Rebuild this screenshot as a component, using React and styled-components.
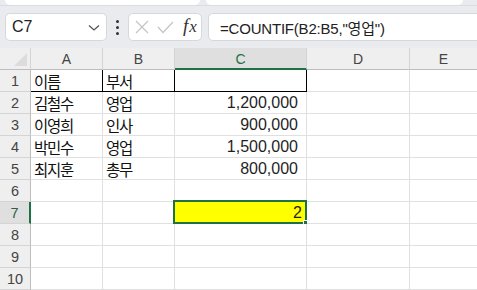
import styled, { createGlobalStyle } from 'styled-components'

const GlobalStyle = createGlobalStyle`
  html, body {
    margin: 0;
    padding: 0;
    background: #e9ebee;
    font-family: "Liberation Sans", Arial, sans-serif;
    overflow: hidden;
  }
`

const green = '#1e7145'

const columns = [
  { key: 'A', width: 72 },
  { key: 'B', width: 72 },
  { key: 'C', width: 132 },
  { key: 'D', width: 103 },
  { key: 'E', width: 68 },
]

const rows = [
  ['이름', '부서', ''],
  ['김철수', '영업', '1,200,000'],
  ['이영희', '인사', '900,000'],
  ['박민수', '영업', '1,500,000'],
  ['최지훈', '총무', '800,000'],
  ['', '', ''],
  ['', '', '2'],
  ['', '', ''],
  ['', '', ''],
  ['', '', ''],
]

export default function App() {
  return (
    <>
      <GlobalStyle />
      <Ribbon>
        <RibbonPanel $width={195} />
        <RibbonPanel $width={257} />
      </Ribbon>
      <FormulaBar>
        <NameBox>
          <span>C7</span>
          <svg width="12" height="8" viewBox="0 0 12 8">
            <path d="M1 1.5 L6 6 L11 1.5" fill="none" stroke="#555" strokeWidth="1.3" />
          </svg>
        </NameBox>
        <Dots>
          <i />
          <i />
          <i />
        </Dots>
        <FxBox>
          <svg width="14" height="14" viewBox="0 0 14 14">
            <path d="M1 1 L13 13 M13 1 L1 13" stroke="#c4c4c4" strokeWidth="1.2" />
          </svg>
          <svg width="17" height="13" viewBox="0 0 17 13">
            <path d="M1 6 L6 11.5 L16 1" fill="none" stroke="#c4c4c4" strokeWidth="1.2" />
          </svg>
          <Fx>
            f<span>x</span>
          </Fx>
        </FxBox>
        <FormulaInput>=COUNTIF(B2:B5,"영업")</FormulaInput>
      </FormulaBar>
      <Sheet>
        <Corner>
          <Triangle />
        </Corner>
        {columns.map((c) => (
          <ColHead key={c.key} $width={c.width} $active={c.key === 'C'}>
            {c.key}
          </ColHead>
        ))}
        {rows.map((r, i) => {
          const n = i + 1
          return [
            <RowHead key={`h${n}`} $active={n === 7}>
              {n}
            </RowHead>,
            <Cell key={`a${n}`} $boxed={n === 1}>
              <Kr>{r[0]}</Kr>
            </Cell>,
            <Cell key={`b${n}`} $boxed={n === 1}>
              <Kr>{r[1]}</Kr>
            </Cell>,
            <Cell
              key={`c${n}`}
              $boxed={n === 1}
              $num
              $fill={n === 7 ? '#ffff00' : undefined}
              $pad={n === 7 ? 4 : 8}
            >
              {r[2]}
              {n === 7 && (
                <>
                  <Selection />
                  <Handle />
                </>
              )}
            </Cell>,
            <Cell key={`d${n}`} />,
            <Cell key={`e${n}`} />,
          ]
        })}
      </Sheet>
    </>
  )
}

const Ribbon = styled.div`
  display: flex;
  gap: 6px;
  padding-left: 5px;
  height: 5px;
  box-shadow: 0 1px 0 #dadde1;
`

const RibbonPanel = styled.div`
  width: ${(p) => p.$width}px;
  background: #fff;
  border-radius: 0 0 6px 6px;
`

const FormulaBar = styled.div`
  display: flex;
  align-items: center;
  height: 28px;
  margin-top: 8px;
  padding-left: 5px;
`

const Box = styled.div`
  box-sizing: border-box;
  height: 28px;
  background: #fff;
  border: 1px solid #d5d8dc;
  border-radius: 5px;
  display: flex;
  align-items: center;
`

const NameBox = styled(Box)`
  width: 102px;
  padding: 0 6px 0 6px;
  justify-content: space-between;
  font-size: 16px;
  color: #222;
  svg {
    margin-top: 2px;
  }
`

const Dots = styled.div`
  width: 21px;
  display: flex;
  flex-direction: column;
  align-items: center;
  gap: 3px;
  i {
    width: 3px;
    height: 3px;
    border-radius: 50%;
    background: #333;
  }
`

const FxBox = styled(Box)`
  width: 74px;
  padding-left: 6px;
  gap: 8px;
`

const Fx = styled.span`
  font-family: "Liberation Serif", "DejaVu Serif", serif;
  font-style: italic;
  font-size: 19px;
  color: #333;
  margin-left: 1px;
  margin-top: -2px;
  span {
    font-size: 17px;
    margin-left: 1px;
  }
`

const FormulaInput = styled(Box)`
  flex: 1;
  margin-left: 6px;
  margin-right: -10px;
  padding-left: 11px;
  font-size: 15px;
  letter-spacing: -0.2px;
  color: #222;
  white-space: nowrap;
  font-family: "Liberation Sans", "Noto Sans CJK KR", sans-serif;
`

const Sheet = styled.div`
  margin-top: 7px;
  display: grid;
  grid-template-columns: 31px 72px 72px 132px 103px 68px;
  grid-auto-rows: 22px;
  background: #fff;
`

const HeadBase = styled.div`
  box-sizing: border-box;
  background: #efefef;
  display: flex;
  align-items: center;
  justify-content: center;
  font-size: 14px;
  color: #444;
  font-family: "Liberation Sans", sans-serif;
`

const Corner = styled(HeadBase)`
  position: relative;
  border-right: 1px solid #d4d4d4;
  border-bottom: 1px solid #bdbdbd;
`

const Triangle = styled.div`
  position: absolute;
  right: 3px;
  bottom: 3px;
  width: 0;
  height: 0;
  border-left: 13px solid transparent;
  border-bottom: 13px solid #dcdcdc;
`

const ColHead = styled(HeadBase)`
  background: ${(p) => (p.$active ? '#dfdfdf' : '#efefef')};
  color: ${(p) => (p.$active ? green : '#444')};
  border-right: 1px solid #d4d4d4;
  border-bottom: ${(p) => (p.$active ? `2px solid ${green}` : '1px solid #bdbdbd')};
  padding-top: ${(p) => (p.$active ? '1px' : '0')};
`

const RowHead = styled(HeadBase)`
  background: ${(p) => (p.$active ? '#dfdfdf' : '#efefef')};
  color: ${(p) => (p.$active ? '#2f5f44' : '#444')};
  border-right: ${(p) => (p.$active ? `2px solid ${green}` : '1px solid #bdbdbd')};
  border-bottom: 1px solid #d4d4d4;
  font-size: 14.5px;
`

const Cell = styled.div`
  position: relative;
  box-sizing: border-box;
  display: flex;
  align-items: center;
  justify-content: ${(p) => (p.$num ? 'flex-end' : 'flex-start')};
  padding: 0 ${(p) => (p.$num ? p.$pad : 0)}px 0 3px;
  background: ${(p) => p.$fill || '#fff'};
  border-right: 1px solid ${(p) => (p.$boxed ? '#000' : '#e0e0e0')};
  border-bottom: 1px solid ${(p) => (p.$boxed ? '#000' : '#e0e0e0')};
  font-size: 16px;
  color: #1f1f1f;
  white-space: nowrap;
`

const Kr = styled.span`
  font-family: "Noto Sans CJK KR", sans-serif;
  font-size: 15.5px;
  letter-spacing: -1.2px;
  color: #111;
`

const Selection = styled.div`
  position: absolute;
  left: -2px;
  top: -2px;
  right: -1px;
  bottom: -1px;
  border: 2px solid ${green};
  pointer-events: none;
`

const Handle = styled.div`
  position: absolute;
  right: -4px;
  bottom: -4px;
  width: 5px;
  height: 5px;
  background: ${green};
  border: 1px solid #fff;
`
